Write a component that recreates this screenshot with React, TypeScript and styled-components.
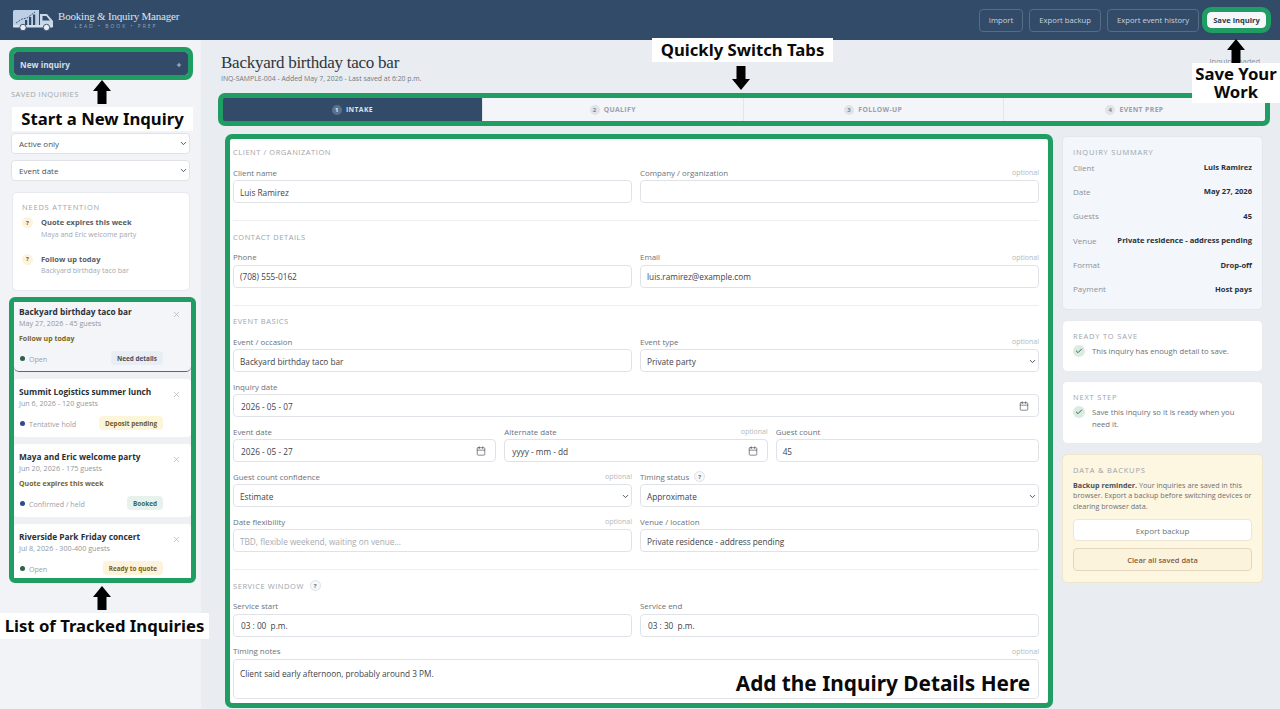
import React from "react";
import styled, { createGlobalStyle } from "styled-components";
import { Calendar, Check, ChevronDown, Plus, X } from "lucide-react";

const NAVY = "#324b69";
const GREEN = "#1f9d63";
const UI_FONT = `"Open Sans", "Noto Sans", sans-serif`;

const GlobalStyle = createGlobalStyle`
  html, body {
    margin: 0;
    padding: 0;
    background: #e9ecf0;
  }
  * {
    box-sizing: border-box;
  }
`;

const Page = styled.div`
  position: relative;
  width: 1280px;
  height: 709px;
  overflow: hidden;
  font-family: ${UI_FONT};
  color: #2a3038;
  background: #e9ecf0;
`;

const TopBar = styled.header`
  height: 40px;
  background: ${NAVY};
  display: flex;
  align-items: center;
  padding: 0 14px 0 13px;
`;

const Brand = styled.div`
  display: flex;
  align-items: center;
  gap: 5px;
  flex: 1;
`;

const BrandText = styled.div`
  display: flex;
  flex-direction: column;
  align-items: center;
  margin-top: -2px;
`;

const BrandName = styled.div`
  font-family: "Liberation Serif", serif;
  font-size: 11px;
  line-height: 14px;
  letter-spacing: -0.2px;
  color: #dfe6ef;
`;

const BrandTag = styled.div`
  font-size: 5px;
  line-height: 7px;
  letter-spacing: 2px;
  margin-right: 5px;
  color: #8fa7c2;
`;

const TopActions = styled.div`
  display: flex;
  align-items: center;
  gap: 6px;
`;

const GhostButton = styled.button`
  height: 23px;
  padding: 0 9px;
  background: transparent;
  border: 1px solid #566c87;
  border-radius: 4px;
  color: #c9d3df;
  font-family: ${UI_FONT};
  font-size: 7.7px;
`;

const SaveButton = styled.button`
  height: 16px;
  width: 59px;
  margin-left: 2px;
  padding: 0;
  background: #f5f7fa;
  border: 0;
  color: #2c3a4b;
  font-family: ${UI_FONT};
  font-size: 7.6px;
  font-weight: 700;
  outline: 5px solid ${GREEN};
  border-radius: 4px;
`;

const Body = styled.div`
  display: flex;
  height: 669px;
`;

const Sidebar = styled.aside`
  width: 201px;
  flex: none;
  padding: 12px 11px 0;
  background: #f1f3f6;
  display: flex;
  flex-direction: column;
`;

const NewInquiry = styled.button`
  height: 23px;
  margin: 0 3px;
  flex: none;
  width: 173.5px;
  padding: 2px 6px 0;
  display: flex;
  align-items: center;
  justify-content: space-between;
  background: ${NAVY};
  border: 0;
  border-radius: 3px;
  color: #d4deea;
  font-family: ${UI_FONT};
  font-size: 8.2px;
  font-weight: 700;
  outline: 5px solid ${GREEN};
`;

const SideLabel = styled.div`
  margin-top: 13px;
  height: 12px;
  line-height: 12px;
  font-size: 7.5px;
  letter-spacing: 0.45px;
  color: #a0a6ae;
`;

const SearchStub = styled.div`
  margin-top: 6px;
  height: 23px;
  flex: none;
`;

const SideSelect = styled.div<{ $gap: number }>`
  margin-top: ${(p) => p.$gap}px;
  flex: none;
  height: 21px;
  padding: 0 6px 0 7px;
  display: flex;
  align-items: center;
  justify-content: space-between;
  background: #fff;
  border: 1px solid #dfe3e8;
  border-radius: 4px;
  font-size: 8px;
  color: #4a5058;
`;

const AttentionCard = styled.section`
  margin: 11px 0 0 1px;
  flex: none;
  height: 99px;
  width: 178px;
  padding: 9px 9px 0;
  background: #fff;
  border: 1px solid #e6e9ed;
  border-radius: 5px;
`;

const CardTitle = styled.div`
  height: 10px;
  line-height: 10px;
  font-size: 7.5px;
  letter-spacing: 0.8px;
  color: #9ea4ac;
`;

const AttentionRow = styled.div<{ $first?: boolean }>`
  display: flex;
  gap: 8px;
  margin-top: ${(p) => (p.$first ? 4 : 13)}px;
`;

const QuestionDot = styled.span`
  width: 11px;
  height: 11px;
  flex: none;
  margin-top: 1px;
  border-radius: 50%;
  background: #fdf3dc;
  color: #6c5a2a;
  font-size: 6px;
  font-weight: 700;
  display: flex;
  align-items: center;
  justify-content: center;
`;

const AttentionName = styled.div`
  font-size: 7.5px;
  line-height: 12.5px;
  font-weight: 700;
  color: #565c64;
`;

const AttentionSub = styled.div`
  font-size: 7px;
  line-height: 11px;
  color: #a3a8af;
`;

const InquiryList = styled.div`
  margin: 11px 0 0 3px;
  flex: none;
  width: 177px;
  height: 276px;
  overflow: hidden;
  background: #eef0f3;
  outline: 5px solid ${GREEN};
  display: flex;
  flex-direction: column;
  gap: 7px;
  border-radius: 1px;
`;

const InquiryCard = styled.article<{ $active?: boolean; $h: number }>`
  position: relative;
  flex: none;
  height: ${(p) => p.$h}px;
  padding: ${(p) => (p.$active ? 4 : 7)}px 6px 0 5px;
  background: ${(p) => (p.$active ? "#f3f5f9" : "#fff")};
  border-bottom: ${(p) => (p.$active ? "1px solid #5a6675" : "0")};
  border-radius: ${(p) => (p.$active ? "0 0 5px 5px" : "4px")};
`;

const InquiryTitle = styled.div`
  font-size: 8.3px;
  line-height: 12px;
  font-weight: 700;
  color: #2a3038;
`;

const InquiryMeta = styled.div`
  font-size: 7.2px;
  line-height: 10px;
  color: #9298a0;
`;

const InquiryAlert = styled.div`
  margin-top: 5px;
  font-size: 7px;
  line-height: 11px;
  font-weight: 700;
  color: #7c6524;
`;

const Dismiss = styled.span<{ $active?: boolean }>`
  position: absolute;
  top: ${(p) => (p.$active ? 8 : 11)}px;
  right: 10px;
  display: flex;
  color: #a2a8b0;
`;

const StatusRow = styled.div<{ $top: number }>`
  display: flex;
  align-items: center;
  justify-content: space-between;
  margin-top: ${(p) => p.$top}px;
  padding-right: 22px;
`;

const Status = styled.div`
  display: flex;
  align-items: center;
  gap: 4px;
  padding-top: 1px;
  font-size: 7.1px;
  color: #9ba0a8;
`;

const Dot = styled.span<{ $color: string }>`
  width: 5px;
  height: 5px;
  margin-left: 1px;
  border-radius: 50%;
  background: ${(p) => p.$color};
`;

const Badge = styled.span<{ $bg: string; $fg: string }>`
  height: 14px;
  padding: 0 6px;
  display: flex;
  align-items: center;
  border-radius: 4px;
  font-size: 6.4px;
  font-weight: 700;
  background: ${(p) => p.$bg};
  color: ${(p) => p.$fg};
`;

const Main = styled.main`
  flex: 1;
  padding: 13px 0 0 20px;
  min-width: 0;
`;

const TitleRow = styled.div`
  display: flex;
  justify-content: space-between;
  height: 31px;
  padding-right: 18px;
`;

const PageTitle = styled.h1`
  margin: 0;
  font-family: "Liberation Serif", serif;
  font-size: 17px;
  line-height: 20px;
  letter-spacing: -0.25px;
  font-weight: 400;
  color: #2d3640;
`;

const PageSub = styled.div`
  font-size: 6.9px;
  line-height: 9px;
  margin-top: 0.5px;
  color: #737a83;
`;

const SavedNote = styled.div`
  font-size: 7.5px;
  line-height: 12px;
  margin-top: 2px;
  color: #8b9098;
`;

const Tabs = styled.nav`
  margin: 14px 0 0 2px;
  width: 1042px;
  height: 23px;
  display: grid;
  grid-template-columns: 259fr 260.5fr 260.5fr 262fr;
  background: #f3f5f8;
  outline: 5px solid ${GREEN};
  border-radius: 2px;
`;

const Tab = styled.div<{ $active?: boolean }>`
  display: flex;
  align-items: center;
  justify-content: center;
  gap: 4px;
  font-size: 6.8px;
  font-weight: 700;
  letter-spacing: 0.4px;
  background: ${(p) => (p.$active ? NAVY : "transparent")};
  color: ${(p) => (p.$active ? "#dbe3ec" : "#97a0ad")};
  border-left: ${(p) => (p.$active ? "0" : "1px solid #e2e5ea")};
`;

const TabNumber = styled.span<{ $active?: boolean }>`
  width: 10px;
  height: 10px;
  border-radius: 50%;
  display: flex;
  align-items: center;
  justify-content: center;
  font-size: 6px;
  background: ${(p) => (p.$active ? "#5c728c" : "#e0e3e8")};
  color: ${(p) => (p.$active ? "#e8edf3" : "#7d8794")};
`;

const Columns = styled.div`
  display: flex;
  align-items: flex-start;
  margin-top: 15px;
`;

const Form = styled.form`
  margin: 3px 0 0 9px;
  width: 818px;
  height: 564px;
  padding: 7px 9px 0 3px;
  overflow: hidden;
  background: #fff;
  outline: 5px solid ${GREEN};
  border-radius: 2px;
`;

const Section = styled.section<{ $first?: boolean; $last?: boolean }>`
  padding: ${(p) => (p.$first ? 0 : 9.5)}px 0 ${(p) => (p.$last ? 0 : 17)}px;
  border-bottom: ${(p) => (p.$last ? "0" : "1px solid #eceef1")};
`;

const SectionHead = styled.div`
  display: flex;
  align-items: center;
  gap: 6px;
  min-height: 12px;
  margin-bottom: 7px;
  font-size: 7.5px;
  letter-spacing: 0.55px;
  color: #9ea4ac;
`;

const FieldGrid = styled.div<{ $cols?: number }>`
  display: grid;
  grid-template-columns: repeat(${(p) => p.$cols ?? 2}, 1fr);
  gap: 7px 8px;
`;

const Field = styled.div<{ $full?: boolean }>`
  min-width: 0;
  grid-column: ${(p) => (p.$full ? "1 / -1" : "auto")};
`;

const LabelRow = styled.div`
  height: 15px;
  display: flex;
  align-items: center;
  justify-content: space-between;
`;

const LabelText = styled.label`
  display: flex;
  align-items: center;
  gap: 5px;
  font-size: 7.9px;
  color: #6c727a;
`;

const Optional = styled.span`
  font-size: 7px;
  color: #b4b8be;
`;

const HelpDot = styled.span`
  width: 11px;
  height: 11px;
  border-radius: 50%;
  border: 1px solid #dfe2e6;
  background: #f7f8f9;
  color: #6b7178;
  font-size: 6px;
  font-weight: 700;
  display: inline-flex;
  align-items: center;
  justify-content: center;
`;

const Control = styled.div<{ $tall?: boolean }>`
  height: ${(p) => (p.$tall ? 40 : 23)}px;
  padding: ${(p) => (p.$tall ? "8px 6px 0" : "1px 6px 0")};
  display: flex;
  align-items: ${(p) => (p.$tall ? "flex-start" : "center")};
  justify-content: space-between;
  background: #fff;
  border: 1px solid #dfe3e8;
  border-radius: 4px;
  font-size: 8.25px;
  color: #3d434b;
`;

const Placeholder = styled.span`
  color: #a6abb2;
`;

const DateValue = styled.span`
  padding-left: 1px;
`;

const IconSlot = styled.span<{ $shift: number }>`
  display: flex;
  margin-right: ${(p) => p.$shift}px;
`;

const Rail = styled.aside`
  margin-left: 14px;
  width: 201px;
  display: flex;
  flex-direction: column;
  gap: 9.5px;
`;

const SummaryCard = styled.section`
  height: 174px;
  padding: 10px 10px 0;
  background: #f3f6fa;
  border: 1px solid #e4e8ed;
  border-radius: 5px;
`;

const SummaryRow = styled.div<{ $first?: boolean }>`
  display: flex;
  justify-content: space-between;
  align-items: center;
  height: 12px;
  margin-top: ${(p) => (p.$first ? 4 : 12.4)}px;
  font-size: 8px;
  color: #8c929a;
`;

const SummaryValue = styled.span`
  font-size: 7.6px;
  font-weight: 700;
  color: #2a3038;
`;

const NoteCard = styled.section<{ $h: number }>`
  height: ${(p) => p.$h}px;
  padding: 10px 10px 0;
  background: #fff;
  border: 1px solid #e8eaee;
  border-radius: 5px;
`;

const CheckRow = styled.div`
  display: flex;
  gap: 7px;
  margin-top: 4px;
  font-size: 7.7px;
  line-height: 12px;
  color: #6c727a;
`;

const CheckDot = styled.span`
  width: 12px;
  height: 12px;
  flex: none;
  border-radius: 50%;
  background: #dcebe2;
  color: #2c6a4a;
  display: flex;
  align-items: center;
  justify-content: center;
`;

const BackupCard = styled.section`
  height: 129px;
  padding: 10px 10px 0;
  background: #fdf6e0;
  border: 1px solid #efe6cc;
  border-radius: 5px;
`;

const BackupText = styled.p`
  margin: 5px 0 0;
  font-size: 7.2px;
  line-height: 10.8px;
  color: #6e7076;
  b {
    color: #4d5057;
  }
`;

const BackupButton = styled.button<{ $danger?: boolean }>`
  display: block;
  width: 179px;
  height: 22.5px;
  margin-top: 7px;
  padding: 0;
  background: ${(p) => (p.$danger ? "#fcf3dd" : "#fff")};
  border: 1px solid ${(p) => (p.$danger ? "#e6d7bc" : "#ebe6d6")};
  border-radius: 4px;
  font-family: ${UI_FONT};
  font-size: ${(p) => (p.$danger ? 7.5 : 8)}px;
  font-weight: ${(p) => (p.$danger ? 600 : 400)};
  color: ${(p) => (p.$danger ? "#8a5a40" : "#6c727a")};
`;

const Callout = styled.div<{ $x: number; $y: number; $w: number; $h: number; $size?: number; $clear?: boolean }>`
  position: absolute;
  left: ${(p) => p.$x}px;
  top: ${(p) => p.$y}px;
  width: ${(p) => p.$w}px;
  height: ${(p) => p.$h}px;
  display: flex;
  align-items: center;
  justify-content: center;
  text-align: center;
  background: ${(p) => (p.$clear ? "transparent" : "#fff")};
  color: #0a0a0a;
  font-family: "Noto Sans", "Open Sans", sans-serif;
  font-weight: 700;
  font-size: ${(p) => p.$size ?? 16.7}px;
  line-height: 18px;
  white-space: nowrap;
`;

const ArrowMark = styled.svg<{ $x: number; $y: number; $down?: boolean }>`
  position: absolute;
  left: ${(p) => p.$x}px;
  top: ${(p) => p.$y}px;
  width: 18px;
  height: 24px;
  transform: ${(p) => (p.$down ? "rotate(180deg)" : "none")};
`;

const Arrow = ({ x, y, down }: { x: number; y: number; down?: boolean }) => (
  <ArrowMark $x={x} $y={y} $down={down} viewBox="0 0 18 24">
    <polygon points="9,0 18,11 13.5,11 13.5,24 4.5,24 4.5,11 0,11" fill="#000" />
  </ArrowMark>
);

const TruckLogo = () => (
  <svg width="40" height="22" viewBox="0 0 40 22" fill="none">
    <path d="M0 2.5 Q0 1 1.5 1 H26 V18 H0 Z" fill="#bccfe4" />
    <path d="M27 5 H34 L40 12 V18 H27 Z" fill="#c9d8e9" />
    <path d="M29.5 7 H33.3 L37 11.5 H29.5 Z" fill="#324b69" />
    <path d="M3 14 L9 10 L14 9 L22 3" stroke="#324b69" strokeWidth="0.9" strokeDasharray="2 1" />
    <rect x="12" y="11" width="2.2" height="6" fill="#324b69" />
    <rect x="16" y="8" width="2.2" height="9" fill="#324b69" />
    <rect x="20" y="5.5" width="2.2" height="11.5" fill="#324b69" />
    <rect x="0" y="16" width="40" height="2.5" rx="1" fill="#d5e0ec" />
    <circle cx="10" cy="18.5" r="3.2" fill="#e8eef5" stroke="#324b69" strokeWidth="0.9" />
    <circle cx="33.5" cy="18.5" r="3.2" fill="#e8eef5" stroke="#324b69" strokeWidth="0.9" />
  </svg>
);

const Chevron = () => (
  <IconSlot $shift={-5}>
    <ChevronDown size={9} strokeWidth={2.4} color="#3f454c" />
  </IconSlot>
);

const CalendarIcon = () => (
  <IconSlot $shift={3}>
    <Calendar size={10} strokeWidth={1.6} color="#4a5058" />
  </IconSlot>
);

const inquiries = [
  { title: "Backyard birthday taco bar", meta: "May 27, 2026 - 45 guests", alert: "Follow up today", status: "Open", dot: "#2f6049", badge: "Need details", bg: "#e9edf4", fg: "#46505e", h: 70, top: 7, active: true },
  { title: "Summit Logistics summer lunch", meta: "Jun 6, 2026 - 120 guests", status: "Tentative hold", dot: "#2f4a8f", badge: "Deposit pending", bg: "#fdf5d8", fg: "#6f5a1e", h: 58, top: 8 },
  { title: "Maya and Eric welcome party", meta: "Jun 20, 2026 - 175 guests", alert: "Quote expires this week", status: "Confirmed / held", dot: "#2f4a8f", badge: "Booked", bg: "#e8f2ec", fg: "#3c6b52", h: 73, top: 7 },
  { title: "Riverside Park Friday concert", meta: "Jul 8, 2026 - 300-400 guests", status: "Open", dot: "#2f6049", badge: "Ready to quote", bg: "#fdf3dc", fg: "#7a6020", h: 60, top: 8 },
];

const summary = [
  ["Client", "Luis Ramirez"],
  ["Date", "May 27, 2026"],
  ["Guests", "45"],
  ["Venue", "Private residence - address pending"],
  ["Format", "Drop-off"],
  ["Payment", "Host pays"],
];

const tabs = ["INTAKE", "QUALIFY", "FOLLOW-UP", "EVENT PREP"];

const Label = ({ text, optional, help }: { text: string; optional?: boolean; help?: boolean }) => (
  <LabelRow>
    <LabelText>
      {text}
      {help && <HelpDot>?</HelpDot>}
    </LabelText>
    {optional && <Optional>optional</Optional>}
  </LabelRow>
);

export default function App() {
  return (
    <Page>
      <GlobalStyle />
      <TopBar>
        <Brand>
          <TruckLogo />
          <BrandText>
            <BrandName>Booking &amp; Inquiry Manager</BrandName>
            <BrandTag>LEAD • BOOK • PREP</BrandTag>
          </BrandText>
        </Brand>
        <TopActions>
          <GhostButton>Import</GhostButton>
          <GhostButton>Export backup</GhostButton>
          <GhostButton>Export event history</GhostButton>
          <SaveButton>Save inquiry</SaveButton>
        </TopActions>
      </TopBar>

      <Body>
        <Sidebar>
          <NewInquiry>
            New inquiry
            <Plus size={6} strokeWidth={3} />
          </NewInquiry>
          <SideLabel>SAVED INQUIRIES</SideLabel>
          <SearchStub />
          <SideSelect $gap={4}>
            Active only
            <Chevron />
          </SideSelect>
          <SideSelect $gap={6}>
            Event date
            <Chevron />
          </SideSelect>

          <AttentionCard>
            <CardTitle>NEEDS ATTENTION</CardTitle>
            <AttentionRow $first>
              <QuestionDot>?</QuestionDot>
              <div>
                <AttentionName>Quote expires this week</AttentionName>
                <AttentionSub>Maya and Eric welcome party</AttentionSub>
              </div>
            </AttentionRow>
            <AttentionRow>
              <QuestionDot>?</QuestionDot>
              <div>
                <AttentionName>Follow up today</AttentionName>
                <AttentionSub>Backyard birthday taco bar</AttentionSub>
              </div>
            </AttentionRow>
          </AttentionCard>

          <InquiryList>
            {inquiries.map((item) => (
              <InquiryCard key={item.title} $active={item.active} $h={item.h}>
                <InquiryTitle>{item.title}</InquiryTitle>
                <InquiryMeta>{item.meta}</InquiryMeta>
                {item.alert && <InquiryAlert>{item.alert}</InquiryAlert>}
                <Dismiss $active={item.active}>
                  <X size={9} strokeWidth={1.6} />
                </Dismiss>
                <StatusRow $top={item.top}>
                  <Status>
                    <Dot $color={item.dot} />
                    {item.status}
                  </Status>
                  <Badge $bg={item.bg} $fg={item.fg}>
                    {item.badge}
                  </Badge>
                </StatusRow>
              </InquiryCard>
            ))}
          </InquiryList>
        </Sidebar>

        <Main>
          <TitleRow>
            <div>
              <PageTitle>Backyard birthday taco bar</PageTitle>
              <PageSub>INQ-SAMPLE-004 - Added May 7, 2026 - Last saved at 6:20 p.m.</PageSub>
            </div>
            <SavedNote>Inquiry loaded.</SavedNote>
          </TitleRow>

          <Tabs>
            {tabs.map((tab, i) => (
              <Tab key={tab} $active={i === 0}>
                <TabNumber $active={i === 0}>{i + 1}</TabNumber>
                {tab}
              </Tab>
            ))}
          </Tabs>

          <Columns>
            <Form>
              <Section $first>
                <SectionHead>CLIENT / ORGANIZATION</SectionHead>
                <FieldGrid>
                  <Field>
                    <Label text="Client name" />
                    <Control>Luis Ramirez</Control>
                  </Field>
                  <Field>
                    <Label text="Company / organization" optional />
                    <Control />
                  </Field>
                </FieldGrid>
              </Section>

              <Section>
                <SectionHead>CONTACT DETAILS</SectionHead>
                <FieldGrid>
                  <Field>
                    <Label text="Phone" />
                    <Control>(708) 555-0162</Control>
                  </Field>
                  <Field>
                    <Label text="Email" optional />
                    <Control>luis.ramirez@example.com</Control>
                  </Field>
                </FieldGrid>
              </Section>

              <Section>
                <SectionHead>EVENT BASICS</SectionHead>
                <FieldGrid>
                  <Field>
                    <Label text="Event / occasion" />
                    <Control>Backyard birthday taco bar</Control>
                  </Field>
                  <Field>
                    <Label text="Event type" optional />
                    <Control>
                      Private party
                      <Chevron />
                    </Control>
                  </Field>
                  <Field $full>
                    <Label text="Inquiry date" />
                    <Control>
                      <DateValue>2026 - 05 - 07</DateValue>
                      <CalendarIcon />
                    </Control>
                  </Field>
                  <Field $full>
                    <FieldGrid $cols={3}>
                      <Field>
                        <Label text="Event date" />
                        <Control>
                          <DateValue>2026 - 05 - 27</DateValue>
                          <CalendarIcon />
                        </Control>
                      </Field>
                      <Field>
                        <Label text="Alternate date" optional />
                        <Control>
                          <DateValue>yyyy - mm - dd</DateValue>
                          <CalendarIcon />
                        </Control>
                      </Field>
                      <Field>
                        <Label text="Guest count" />
                        <Control>45</Control>
                      </Field>
                    </FieldGrid>
                  </Field>
                  <Field>
                    <Label text="Guest count confidence" optional />
                    <Control>
                      Estimate
                      <Chevron />
                    </Control>
                  </Field>
                  <Field>
                    <Label text="Timing status" help />
                    <Control>
                      Approximate
                      <Chevron />
                    </Control>
                  </Field>
                  <Field>
                    <Label text="Date flexibility" optional />
                    <Control>
                      <Placeholder>TBD, flexible weekend, waiting on venue...</Placeholder>
                    </Control>
                  </Field>
                  <Field>
                    <Label text="Venue / location" />
                    <Control>Private residence - address pending</Control>
                  </Field>
                </FieldGrid>
              </Section>

              <Section $last>
                <SectionHead>
                  SERVICE WINDOW
                  <HelpDot>?</HelpDot>
                </SectionHead>
                <FieldGrid>
                  <Field>
                    <Label text="Service start" />
                    <Control>
                      <DateValue>03 : 00&nbsp; p.m.</DateValue>
                    </Control>
                  </Field>
                  <Field>
                    <Label text="Service end" />
                    <Control>
                      <DateValue>03 : 30&nbsp; p.m.</DateValue>
                    </Control>
                  </Field>
                  <Field $full>
                    <Label text="Timing notes" optional />
                    <Control $tall>Client said early afternoon, probably around 3 PM.</Control>
                  </Field>
                </FieldGrid>
              </Section>
            </Form>

            <Rail>
              <SummaryCard>
                <CardTitle>INQUIRY SUMMARY</CardTitle>
                {summary.map(([key, value], i) => (
                  <SummaryRow key={key} $first={i === 0}>
                    {key}
                    <SummaryValue>{value}</SummaryValue>
                  </SummaryRow>
                ))}
              </SummaryCard>
              <NoteCard $h={52}>
                <CardTitle>READY TO SAVE</CardTitle>
                <CheckRow>
                  <CheckDot>
                    <Check size={8} strokeWidth={3} />
                  </CheckDot>
                  <span>This inquiry has enough detail to save.</span>
                </CheckRow>
              </NoteCard>
              <NoteCard $h={63}>
                <CardTitle>NEXT STEP</CardTitle>
                <CheckRow>
                  <CheckDot>
                    <Check size={8} strokeWidth={3} />
                  </CheckDot>
                  <span>Save this inquiry so it is ready when you need it.</span>
                </CheckRow>
              </NoteCard>
              <BackupCard>
                <CardTitle>DATA &amp; BACKUPS</CardTitle>
                <BackupText>
                  <b>Backup reminder.</b> Your inquiries are saved in this browser. Export a backup before switching devices or clearing browser data.
                </BackupText>
                <BackupButton>Export backup</BackupButton>
                <BackupButton $danger>Clear all saved data</BackupButton>
              </BackupCard>
            </Rail>
          </Columns>
        </Main>
      </Body>

      <Arrow x={93} y={80} />
      <Callout $x={12} $y={107} $w={181} $h={24}>Start a New Inquiry</Callout>
      <Arrow x={93} y={586} />
      <Callout $x={0} $y={613} $w={209} $h={26}>List of Tracked Inquiries</Callout>
      <Callout $x={652} $y={38} $w={181} $h={24}>Quickly Switch Tabs</Callout>
      <Arrow x={732} y={66} down />
      <Arrow x={1227} y={39} />
      <Callout $x={1192} $y={63} $w={88} $h={40}>
        Save Your
        <br />
        Work
      </Callout>
      <Callout $x={733} $y={670} $w={300} $h={25} $size={20.8} $clear>
        Add the Inquiry Details Here
      </Callout>
    </Page>
  );
}
